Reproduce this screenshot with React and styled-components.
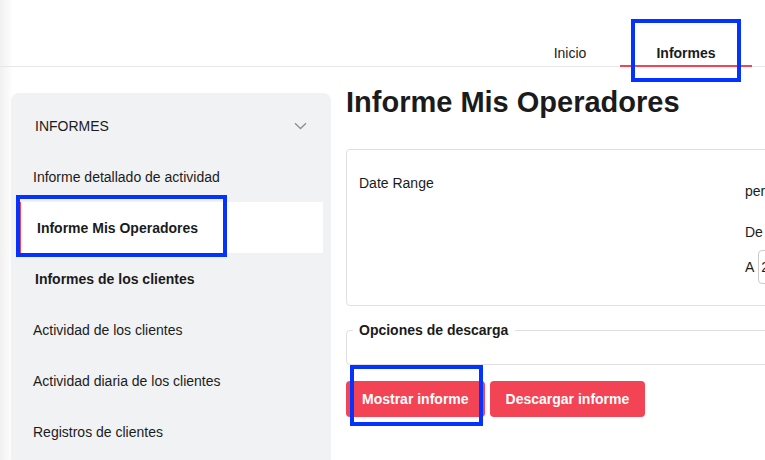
import React from 'react';
import styled, { createGlobalStyle } from 'styled-components';

/**
 * @section Styles
 */

const GlobalStyle = createGlobalStyle`
  html, body {
    margin: 0;
    padding: 0;
    overflow: hidden;
  }
  body {
    font-family: "Liberation Sans", Arial, sans-serif;
    color: #1b1b1b;
    background: #fff;
  }
`;

const Page = styled.div`
  background: linear-gradient(to right, #f1f1f1 0, #f8f8f8 7px, #fff 13px);
  height: 460px;
  width: 765px;
  overflow: hidden;
`;

const Header = styled.header`
  align-items: flex-end;
  border-bottom: 1px solid #e7e7e9;
  display: flex;
  height: 66px;
  justify-content: flex-end;
  padding-right: 13px;
`;

const Tab = styled.div`
  border-bottom: 2px solid ${props => (props.active ? '#f34455' : 'transparent')};
  box-sizing: border-box;
  font-size: 14px;
  font-weight: ${props => (props.active ? 700 : 400)};
  height: 31px;
  line-height: 28px;
  margin-bottom: -1px;
  padding-top: 3px;
  position: relative;
  text-align: center;
  width: ${props => props.width}px;
`;

const Mark = styled.div`
  border: 4px solid #0433ff;
  box-sizing: border-box;
  height: ${props => props.h}px;
  left: ${props => props.x}px;
  pointer-events: none;
  position: absolute;
  top: ${props => props.y}px;
  width: ${props => props.w}px;
  z-index: 20;
`;

const Body = styled.div`
  display: flex;
  gap: 15px;
  padding-left: 11px;
  padding-top: 26px;
`;

const Sidebar = styled.nav`
  background: #f1f2f4;
  border-radius: 8px;
  box-sizing: border-box;
  flex: 0 0 320px;
  height: 400px;
  padding: 8px 8px 0;
`;

const SideHead = styled.div`
  align-items: center;
  display: flex;
  font-size: 14px;
  height: 50px;
  justify-content: space-between;
  padding: 0 16px 0 16px;
`;

const Item = styled.div`
  align-items: center;
  background: ${props => (props.active ? '#fff' : 'transparent')};
  border-left: 2px solid ${props => (props.active ? '#f34455' : 'transparent')};
  box-sizing: border-box;
  display: flex;
  font-size: 14px;
  font-weight: ${props => (props.bold ? 700 : 400)};
  height: 51px;
  padding-left: ${props => props.indent}px;
  position: relative;
`;

const Main = styled.main`
  flex: 0 0 640px;
`;

const Title = styled.h1`
  font-size: 29px;
  font-weight: 700;
  line-height: 34px;
  margin: -8px 0 0;
`;

const Card = styled.section`
  border: 1px solid #dfe0e2;
  border-radius: 4px;
  box-sizing: border-box;
  display: flex;
  height: 157px;
  margin-top: 30px;
`;

const Label = styled.div`
  flex: 0 0 386px;
  font-size: 14px;
  padding: 25px 0 0 12px;
`;

const Fields = styled.div`
  display: flex;
  flex-direction: column;
  font-size: 14px;
  padding-top: 30px;
`;

const FieldRow = styled.div`
  align-items: center;
  display: flex;
  gap: 4px;
  height: ${props => props.h}px;
  margin-top: ${props => props.gap || 0}px;
`;

const Input = styled.div`
  border: 1px solid #c9cacc;
  border-radius: 4px;
  box-sizing: border-box;
  height: 34px;
  line-height: 32px;
  padding-left: 2px;
  width: 120px;
`;

const Fieldset = styled.fieldset`
  border: 1px solid #dfe0e2;
  border-radius: 4px;
  box-sizing: border-box;
  height: 43px;
  margin: 16px 0 0;
  padding: 0;
`;

const Legend = styled.legend`
  font-size: 14px;
  font-weight: 700;
  margin-left: 6px;
  padding: 0 7px 0 6px;
`;

const Buttons = styled.div`
  display: flex;
  gap: 5px;
  margin-top: 16px;
`;

const Button = styled.button`
  background: #f34455;
  border: 0;
  border-radius: 4px;
  color: #fff;
  font-family: inherit;
  font-size: 14px;
  font-weight: 700;
  height: 36px;
  padding: 0 16px;
  position: relative;
`;

/**
 * @section Markup
 */

const Chevron = () => (
  <svg width="13" height="8" viewBox="0 0 13 8" fill="none">
    <path d="M1 1.2l5.5 5.3 5.5-5.3" stroke="#8d8e91" strokeWidth="1.3" />
  </svg>
);

const items = [
  { label: 'Informe detallado de actividad', indent: 12 },
  { label: 'Informe Mis Operadores', indent: 16, active: true, bold: true },
  { label: 'Informes de los clientes', indent: 14, bold: true },
  { label: 'Actividad de los clientes', indent: 12 },
  { label: 'Actividad diaria de los clientes', indent: 12 },
  { label: 'Registros de clientes', indent: 12 },
];

export default function App() {
  return (
    <Page>
      <GlobalStyle />
      <Header>
        <Tab width={100}>Inicio</Tab>
        <Tab width={132} active>
          Informes
          <Mark x={11} y={-17} w={110} h={63} />
        </Tab>
      </Header>
      <Body>
        <Sidebar>
          <SideHead>
            INFORMES
            <Chevron />
          </SideHead>
          {items.map((item) => (
            <Item key={item.label} active={item.active} bold={item.bold} indent={item.indent}>
              {item.label}
              {item.active && <Mark x={-5} y={-7} w={211} h={62} />}
            </Item>
          ))}
        </Sidebar>
        <Main>
          <Title>Informe Mis Operadores</Title>
          <Card>
            <Label>Date Range</Label>
            <Fields>
              <FieldRow h={22}>per</FieldRow>
              <FieldRow h={22} gap={19}>De</FieldRow>
              <FieldRow h={34} gap={7}>
                A <Input>2023-01-01</Input>
              </FieldRow>
            </Fields>
          </Card>
          <Fieldset>
            <Legend>Opciones de descarga</Legend>
          </Fieldset>
          <Buttons>
            <Button>
              Mostrar informe
              <Mark x={4} y={-16} w={133} h={61} />
            </Button>
            <Button>Descargar informe</Button>
          </Buttons>
        </Main>
      </Body>
    </Page>
  );
}
